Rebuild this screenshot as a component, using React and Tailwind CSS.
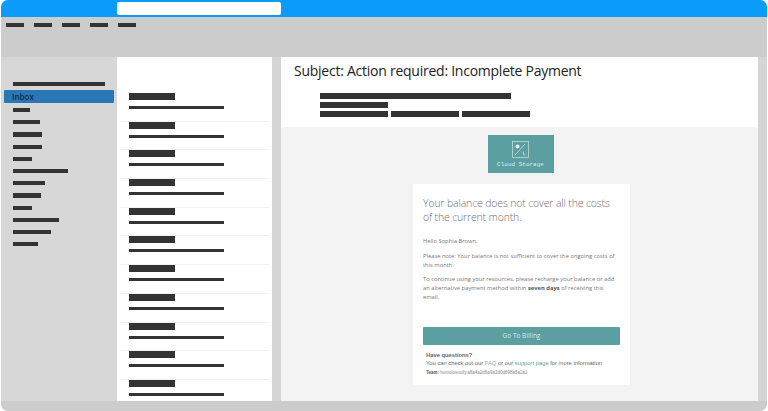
const folderWidths = [17, 27, 29, 29, 19, 55, 32, 28, 19, 46, 38, 25];
const messageRows = Array.from({ length: 11 }, (_, i) => i);

function Bar({ className }) {
  return <div className={`bg-[#333333] ${className}`} />;
}

function Sidebar() {
  return (
    <aside className="w-[116px] shrink-0 bg-[#d8d7d7] pt-[25px]">
      <Bar className="ml-3 h-[4px] w-[92px]" />
      <div className="mx-[3px] mt-[4px] flex h-[13px] items-center rounded-[1px] bg-[#2a77b5] pl-2 text-[8px] font-semibold text-[#0c2f52]">
        Inbox
      </div>
      <div className="mt-[5px] flex flex-col gap-[8px] pl-3">
        {folderWidths.map((width, i) => (
          <div key={i} className="h-[4.2px] bg-[#333333]" style={{ width }} />
        ))}
      </div>
    </aside>
  );
}

function MessageList() {
  return (
    <section className="w-[155px] shrink-0 overflow-hidden bg-white pt-[36px]">
      {messageRows.map((row) => (
        <div
          key={row}
          className="mx-[3px] h-[28.7px] border-b border-[#f1f1f1] pl-[9px]"
        >
          <Bar className="h-[7px] w-[46px]" />
          <Bar className="mt-[6px] h-[3px] w-[95px]" />
        </div>
      ))}
    </section>
  );
}

function LogoTile() {
  return (
    <div className="mr-[2px] flex h-[38px] w-[66px] flex-col items-center bg-[#5b9fa1] pt-[6px]">
      <svg width="17" height="17" viewBox="0 0 17 17" fill="none" stroke="#cfe3e3" strokeWidth="0.7">
        <rect x="0.5" y="0.5" width="16" height="16" />
        <circle cx="5.5" cy="5.5" r="2" fill="#e4efef" stroke="none" />
        <path d="M3 14 L13 3" />
        <path d="M11.5 10.5 V14 H13.5" />
      </svg>
      <div className="mt-[4px] font-['Liberation_Mono',monospace] text-[6px] leading-none text-[#dcebeb]">
        Cloud Storage
      </div>
    </div>
  );
}

function EmailCard() {
  return (
    <div className="mt-[11px] h-[201px] w-[217px] bg-white px-[10px] pt-[12px] text-[#777777]">
      <h2 className="text-[10.5px] leading-[14px] font-light tracking-[-0.15px] text-[#6f6f6f]">
        Your balance does not cover all the costs of the current month.
      </h2>
      <p className="mt-[13px] text-[5.8px] leading-[9px]">Hello Sophia Brown,</p>
      <p className="mt-[6px] text-[5.8px] leading-[9px]">
        Please note: Your balance is not sufficient to cover the ongoing costs of this month.
      </p>
      <p className="mt-[5px] text-[5.8px] leading-[9px]">
        To continue using your resources, please recharge your balance or add an alternative
        payment method within <b className="text-[#555555]">seven days</b> of receiving this email.
      </p>
      <div className="mt-[25px] flex h-[18px] items-center justify-center rounded-[1px] bg-[#5b9fa1] text-[6.5px] text-[#d7e8e8]">
        Go To Billing
      </div>
      <div className="mt-[6px] pl-[3px] font-['Liberation_Sans',sans-serif] text-[5.8px] leading-[8px] text-[#666666]">
        <div className="font-bold">Have questions?</div>
        <div>
          You can check out our <span className="text-[#7fb0b2]">FAQ</span> or our{" "}
          <span className="text-[#5b9fa1]">support page</span> for more information
        </div>
        <div className="mt-[3px] text-[4.5px] leading-[6px] whitespace-nowrap text-[#888888]">
          <span className="font-bold text-[#555555]">Team:</span> homoiosoully.a8a4a2d6a9a3d0d898a5a2a1
        </div>
      </div>
    </div>
  );
}

function ReadingPane() {
  return (
    <section className="ml-[9px] flex w-[477px] shrink-0 flex-col bg-white">
      <h1 className="mt-[4px] ml-[13px] text-[14px] leading-[20px] tracking-[-0.25px] text-[#222222]">
        Subject: Action required: Incomplete Payment
      </h1>
      <div className="mt-[12px] ml-[39px] flex flex-col gap-[3px]">
        <Bar className="h-[6px] w-[191px]" />
        <Bar className="h-[6px] w-[68px]" />
        <div className="flex gap-[3px]">
          <Bar className="h-[6px] w-[68px]" />
          <Bar className="h-[6px] w-[68px]" />
          <Bar className="h-[6px] w-[68px]" />
        </div>
      </div>
      <div className="mt-[10px] flex flex-1 flex-col items-center rounded-t-[4px] bg-[#f3f3f3] pt-[8px] pl-[4px]">
        <LogoTile />
        <EmailCard />
      </div>
    </section>
  );
}

export default function App() {
  return (
    <div className="h-[411px] w-[768px] overflow-hidden bg-white pl-px font-['Open_Sans',sans-serif]">
      <div className="flex h-full w-[766px] flex-col overflow-hidden rounded-t-[7px] rounded-b-[7px] bg-[#cccccc]">
        <header className="flex h-[17px] shrink-0 items-start bg-[#0a9cf8] pt-[2px] pl-[116px]">
          <div className="h-[13px] w-[164px] rounded-[2px] bg-white" />
        </header>
        <nav className="flex h-[40px] shrink-0 gap-[10px] pt-[6px] pl-[5px]">
          {["file", "edit", "view", "tools", "help"].map((item) => (
            <Bar key={item} className="h-[4px] w-[18px]" />
          ))}
        </nav>
        <main className="flex h-[344px] shrink-0 bg-[#d6d5d5]">
          <Sidebar />
          <MessageList />
          <ReadingPane />
        </main>
      </div>
    </div>
  );
}
